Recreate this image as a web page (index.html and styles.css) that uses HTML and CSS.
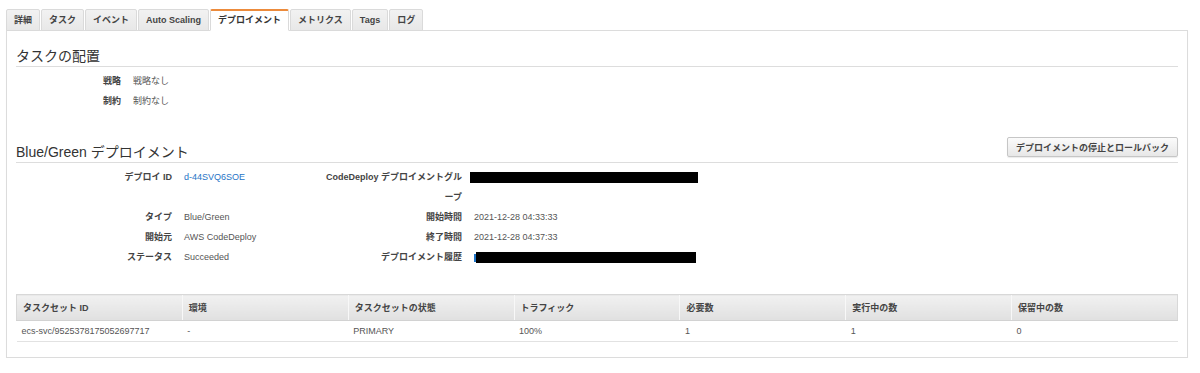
FILE: index.html
```html
<!DOCTYPE html>
<html lang="ja">
<head>
    <meta charset="UTF-8">
    <title>ECS サービス - デプロイメント</title>
    <link rel="stylesheet" href="styles.css">
</head>
<body>
    <div class="page">
        <!-- Tabs -->
        <ul class="tabs">
            <li class="tab">詳細</li>
            <li class="tab">タスク</li>
            <li class="tab">イベント</li>
            <li class="tab">Auto Scaling</li>
            <li class="tab active">デプロイメント</li>
            <li class="tab">メトリクス</li>
            <li class="tab">Tags</li>
            <li class="tab">ログ</li>
        </ul>

        <div class="panel">
            <!-- Task placement -->
            <div class="section">
                <div class="section-head">
                    <h2>タスクの配置</h2>
                </div>
                <div class="props props-placement">
                    <div class="label">戦略</div>
                    <div class="value">戦略なし</div>
                    <div class="label">制約</div>
                    <div class="value">制約なし</div>
                </div>
            </div>

            <!-- Blue/Green deployment -->
            <div class="section section-deploy">
                <div class="section-head">
                    <h2>Blue/Green デプロイメント</h2>
                    <button class="btn">デプロイメントの停止とロールバック</button>
                </div>
                <div class="props props-deploy">
                    <div class="label">デプロイ ID</div>
                    <div class="value"><a class="link" href="#">d-44SVQ6SOE</a></div>
                    <div class="label label-wrap">CodeDeploy デプロイメントグループ</div>
                    <div class="value"><span class="redacted redacted-group"></span></div>

                    <div class="label">タイプ</div>
                    <div class="value">Blue/Green</div>
                    <div class="label">開始時間</div>
                    <div class="value">2021-12-28 04:33:33</div>

                    <div class="label">開始元</div>
                    <div class="value">AWS CodeDeploy</div>
                    <div class="label">終了時間</div>
                    <div class="value">2021-12-28 04:37:33</div>

                    <div class="label">ステータス</div>
                    <div class="value">Succeeded</div>
                    <div class="label">デプロイメント履歴</div>
                    <div class="value"><span class="link-stub"></span><span class="redacted redacted-history"></span></div>
                </div>
            </div>

            <!-- Task sets -->
            <table class="tasksets">
                <thead>
                    <tr>
                        <th>タスクセット ID</th>
                        <th>環境</th>
                        <th>タスクセットの状態</th>
                        <th>トラフィック</th>
                        <th>必要数</th>
                        <th>実行中の数</th>
                        <th>保留中の数</th>
                    </tr>
                </thead>
                <tbody>
                    <tr>
                        <td>ecs-svc/9525378175052697717</td>
                        <td>-</td>
                        <td>PRIMARY</td>
                        <td>100%</td>
                        <td>1</td>
                        <td>1</td>
                        <td>0</td>
                    </tr>
                </tbody>
            </table>
        </div>
    </div>
</body>
</html>
```

FILE: styles.css
```css
* {
    margin: 0;
    padding: 0;
    box-sizing: border-box;
}

body {
    font-family: "Liberation Sans", "Noto Sans CJK JP", sans-serif;
    font-size: 9px;
    color: #444;
    background: white;
}

.page {
    width: 1182px;
    margin-left: 6px;
    padding-top: 9px;
}

/* Tabs */
.tabs {
    display: flex;
    gap: 1px;
    list-style: none;
    position: relative;
    z-index: 1;
}

.tab {
    line-height: 20px;
    padding: 0 7px;
    margin-bottom: -1px;
    font-weight: bold;
    color: #444;
    background: linear-gradient(#f2f2f2, #e8e8e8);
    border: 1px solid #dadada;
    border-radius: 2px 2px 0 0;
    white-space: nowrap;
}

.tab.active {
    background: white;
    border-top: 2px solid #ec8b3c;
    border-bottom-color: white;
    line-height: 19px;
    color: #333;
}

/* Panel */
.panel {
    border: 1px solid #dcdcdc;
    box-shadow: 0 1px 1px rgba(0,0,0,0.04);
    padding: 0 9px 15px 9px;
}

.section {
    padding-top: 15px;
}

.section-deploy {
    padding-top: 26px;
}

.section-head {
    display: flex;
    justify-content: space-between;
    align-items: flex-end;
    border-bottom: 1px solid #ddd;
}

.section-head h2 {
    font-size: 14px;
    font-weight: normal;
    line-height: 20px;
    color: #333;
}

.btn {
    font-family: inherit;
    font-size: 9px;
    font-weight: bold;
    color: #444;
    height: 20px;
    padding: 0 8px;
    margin-bottom: 5px;
    background: linear-gradient(#fbfbfb, #e7e7e7);
    border: 1px solid #c6c6c6;
    border-radius: 2px;
    box-shadow: 0 1px 1px rgba(0,0,0,0.08);
    cursor: pointer;
}

/* Key / value rows */
.props {
    display: grid;
    column-gap: 12px;
    padding-top: 4px;
    line-height: 20px;
}

.props-placement {
    grid-template-columns: 105px 1fr;
}

.props-deploy {
    grid-template-columns: 156px 126px 140px 1fr;
}

.label {
    font-weight: bold;
    text-align: right;
    color: #444;
}

.label-wrap {
    line-break: loose;
}

.value {
    color: #555;
}

.link {
    color: #1f74c6;
    text-decoration: none;
}

.redacted {
    display: inline-block;
    height: 11px;
    background: black;
    vertical-align: middle;
}

.redacted-group {
    width: 228px;
    margin-left: -4px;
}

.redacted-history {
    width: 220px;
}

.link-stub {
    display: inline-block;
    width: 2px;
    height: 8px;
    background: #1f74c6;
    vertical-align: middle;
}

/* Task set table */
.tasksets {
    width: 100%;
    margin-top: 27px;
    border-collapse: collapse;
    table-layout: fixed;
}

.tasksets th {
    height: 26px;
    padding: 0 6px;
    text-align: left;
    font-weight: bold;
    color: #444;
    background: linear-gradient(#f1f1f1, #e0e0e0);
    border-top: 1px solid #d8d8d8;
    border-bottom: 1px solid #d2d2d2;
    border-left: 1px solid #f8f8f8;
}

.tasksets th:first-child {
    border-left: 1px solid #d8d8d8;
}

.tasksets th:last-child {
    border-right: 1px solid #d8d8d8;
}

.tasksets td {
    height: 21px;
    padding: 0 5px;
    color: #555;
    border-bottom: 1px solid #e2e2e2;
    white-space: nowrap;
}
```
